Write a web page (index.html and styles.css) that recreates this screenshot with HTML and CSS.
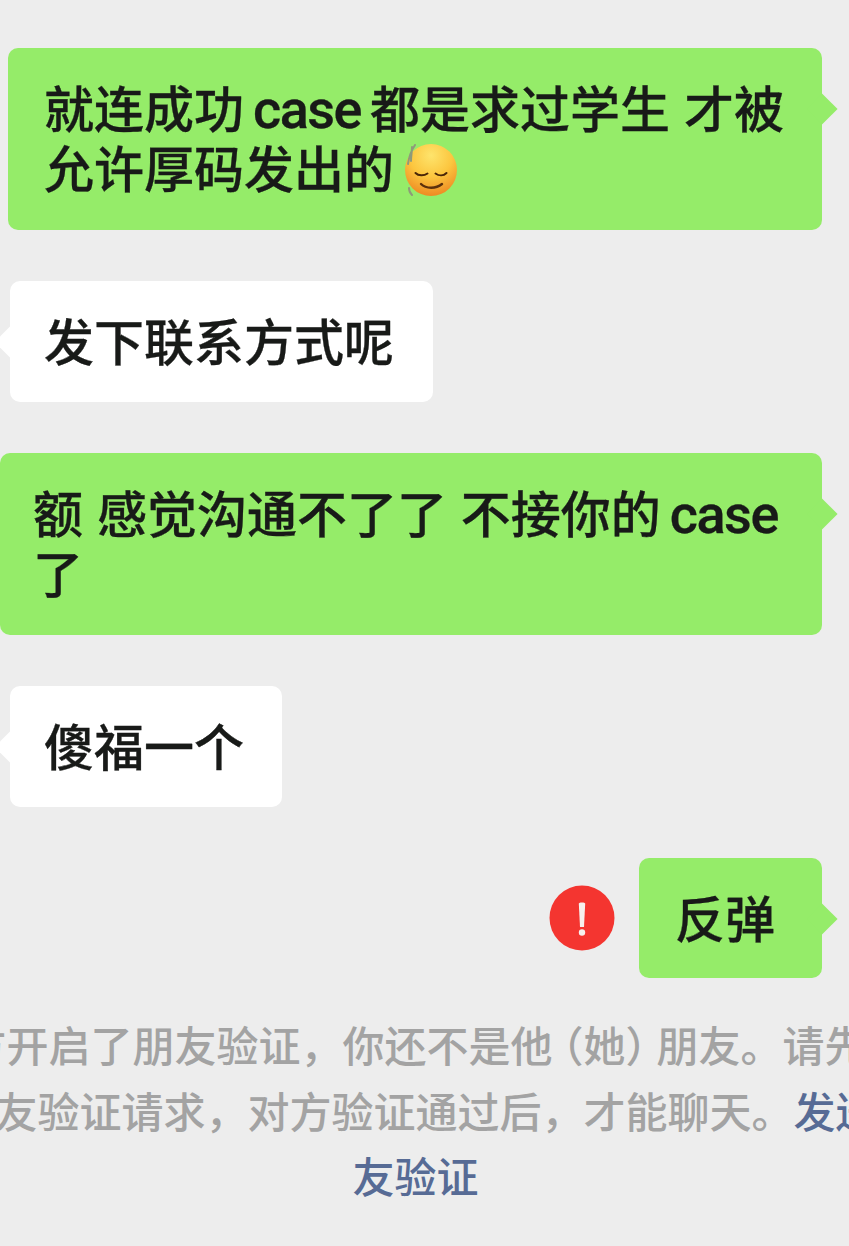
FILE: index.html
```html
<!DOCTYPE html>
<html lang="zh-CN">
<head>
<meta charset="utf-8">
<title>聊天</title>
<link rel="stylesheet" href="styles.css">
</head>
<body>
<main class="chat">
  <div class="row row-out">
    <div class="bubble out bubble-first">就连成功<span class="latin">case</span>都是求过学生 才被<br>允许厚码发出的<svg class="emoji" viewBox="0 0 52 52" aria-hidden="true">
      <defs>
        <radialGradient id="face" cx="50%" cy="22%" r="82%">
          <stop offset="0" stop-color="#fee46c"/>
          <stop offset="0.5" stop-color="#fcc63f"/>
          <stop offset="1" stop-color="#ec8420"/>
        </radialGradient>
      </defs>
      <circle cx="26" cy="26" r="26" fill="url(#face)"/>
      <path d="M10 1C6 7 4 13 3 20M7 3C7 8 6 12 6 17M4 44c0 3 1 5 3 7" fill="none" stroke="#8f9a7a" stroke-width="2" stroke-linecap="round"/>
      <path d="M10.500 29c3 3 8.500 3 12 .5M30.500 29.500c3.500 2.500 8 2.500 11-.5" fill="none" stroke="#4a2608" stroke-width="2" stroke-linecap="round"/>
      <path d="M16 40c5 5 15 5 21 0" fill="none" stroke="#5c300c" stroke-width="2.400" stroke-linecap="round"/>
    </svg></div>
  </div>
  <div class="row row-in">
    <div class="bubble in bubble-contact">发下联系方式呢</div>
  </div>
  <div class="row row-out">
    <div class="bubble out bubble-wide">额 感觉沟通不了了 不接你的<span class="latin">case</span><br>了</div>
  </div>
  <div class="row row-in">
    <div class="bubble in">傻福一个</div>
  </div>
  <div class="row row-out row-failed">
    <svg class="alert" viewBox="0 0 66 66" role="img" aria-label="发送失败">
      <circle cx="33" cy="33" r="32.500" fill="#f43530"/>
      <path d="M29.800 18.500c0-1.500 6.400-1.500 6.400 0L35 42h-4z" fill="#f7f0ee"/>
      <circle cx="33" cy="47.500" r="3.200" fill="#f7f0ee"/>
    </svg>
    <div class="bubble out bubble-short">反弹</div>
  </div>
  <p class="notice">方开启了朋友验证，你还不是他<span class="paren">（她）</span>朋友。请先<br>朋友验证请求，对方验证通过后，才能聊天。<span class="link">发送</span><br><span class="link">友验证</span></p>
</main>
</body>
</html>
```
FILE: styles.css
```css
html, body {
  margin: 0;
  padding: 0;
}

body {
  width: 849px;
  height: 1246px;
  overflow: hidden;
  background: #ededed;
  color: #181a18;
  font-family: "Liberation Sans", "Noto Sans CJK SC", sans-serif;
}

.chat {
  display: flex;
  flex-direction: column;
  gap: 51px;
  padding-top: 48px;
}

.row {
  display: flex;
}

.row-out {
  justify-content: flex-end;
  padding-right: 27px;
}

.row-in {
  padding-left: 10px;
}

.row-failed {
  align-items: center;
  gap: 24px;
}

.bubble {
  position: relative;
  box-sizing: border-box;
  padding: 33px 38px 28px 34px;
  border-radius: 10px;
  font-size: 50px;
  font-weight: 500;
  line-height: 60px;
  white-space: nowrap;
  -webkit-text-stroke: 0.3px #181a18;
}

.bubble::after {
  content: "";
  position: absolute;
  top: 50px;
  width: 22px;
  height: 22px;
  background: inherit;
  transform: rotate(45deg);
}

.out {
  background: #95ec69;
}

.out::after {
  right: -11px;
}

.in {
  background: #fff;
}

.in::after {
  left: -11px;
}

.latin {
  margin: 0 9px;
  font-family: Roboto, "Liberation Sans", sans-serif;
  font-size: 54px;
  font-weight: 500;
  line-height: 1;
  letter-spacing: -1.500px;
}

.bubble-first {
  width: 814px;
  padding-bottom: 29px;
  padding-left: 36px;
}

.bubble-contact {
  padding-right: 39px;
}

.bubble-wide {
  width: 822px;
  padding-left: 33px;
  padding-bottom: 29px;
}

.bubble-short {
  padding-left: 36px;
  padding-right: 47px;
  padding-bottom: 27px;
}

.emoji {
  width: 52px;
  height: 52px;
  margin-left: 11px;
  vertical-align: -8px;
}

.alert {
  width: 66px;
  height: 66px;
  flex: none;
}

.notice {
  margin: -14px -200px 0 -218px;
  color: #a3a3a3;
  font-size: 42px;
  font-weight: 500;
  line-height: 65.500px;
  text-align: center;
  white-space: nowrap;
}

.paren {
  margin: 0 -11px;
}

.link {
  color: #576b95;
}
```
